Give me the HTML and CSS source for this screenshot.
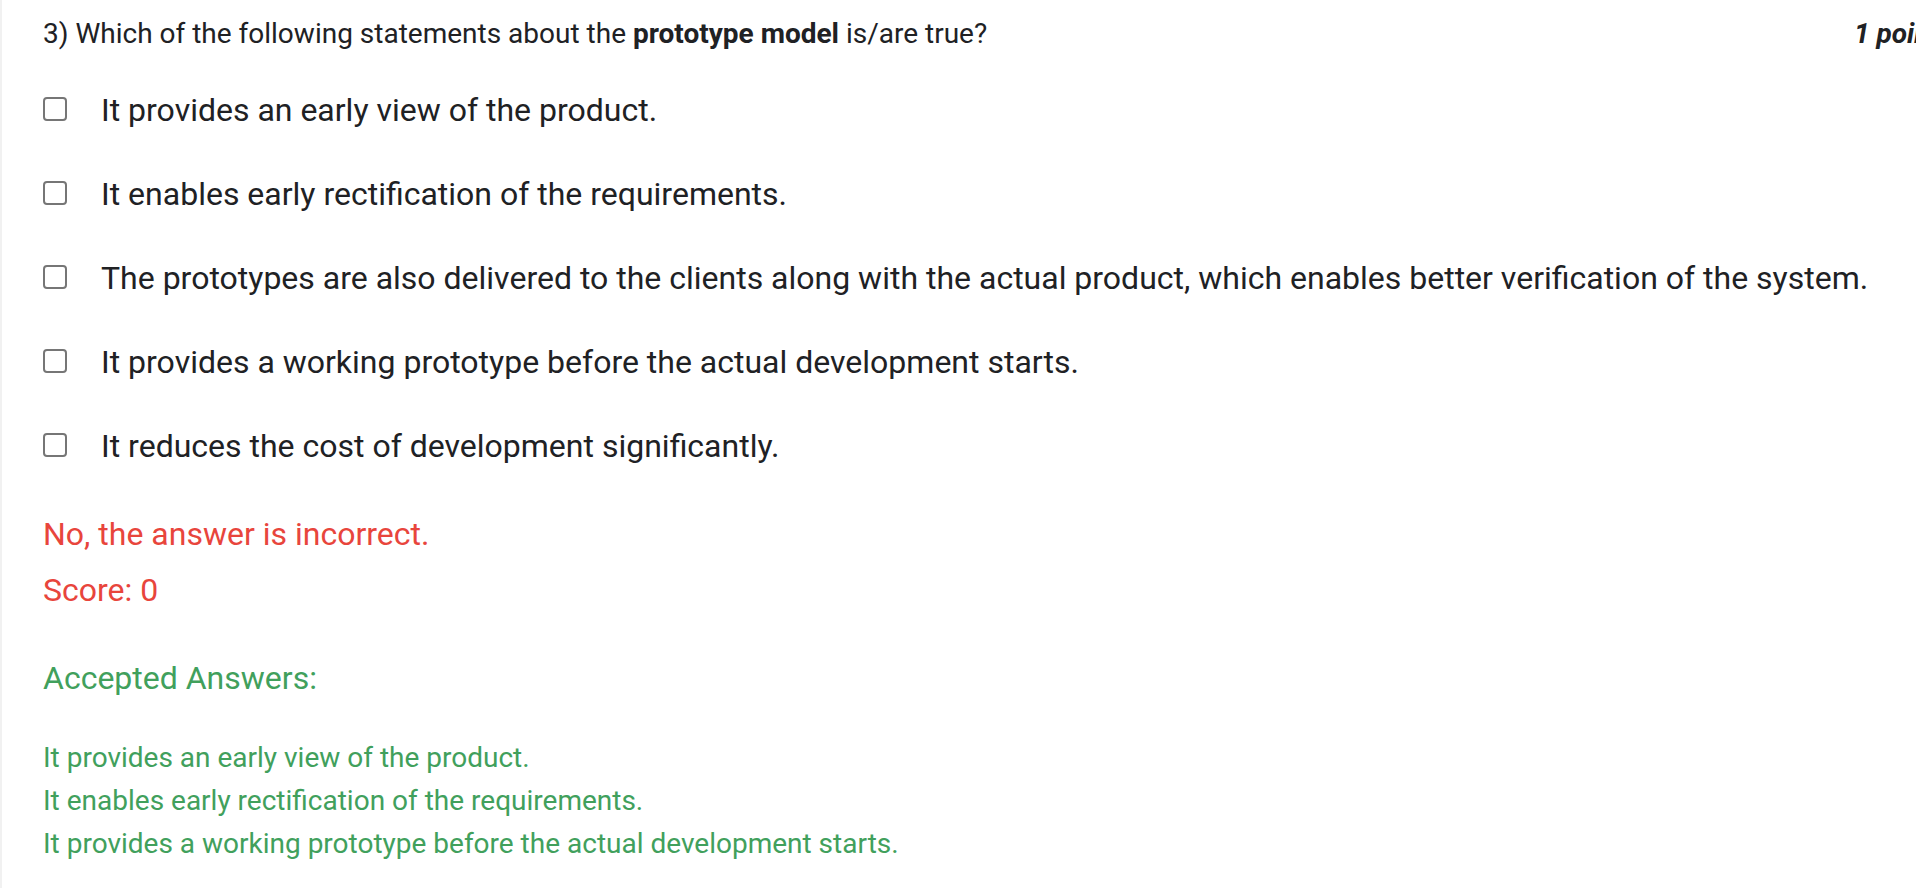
FILE: index.html
```html
<!DOCTYPE html>
<html lang="en">
<head>
<meta charset="utf-8">
<title>Assessment</title>
<link rel="stylesheet" href="styles.css">
</head>
<body>
<div class="quiz">
  <div class="qrow">
    <div class="question">3) Which of the following statements about the <b>prototype model</b> is/are true?</div>
    <div class="points">1 point</div>
  </div>
  <div class="options">
    <label class="option"><span class="box"></span><span class="otext">It provides an early view of the product.</span></label>
    <label class="option"><span class="box"></span><span class="otext">It enables early rectification of the requirements.</span></label>
    <label class="option"><span class="box"></span><span class="otext">The prototypes are also delivered to the clients along with the actual product, which enables better verification of the system.</span></label>
    <label class="option"><span class="box"></span><span class="otext">It provides a working prototype before the actual development starts.</span></label>
    <label class="option"><span class="box"></span><span class="otext">It reduces the cost of development significantly.</span></label>
  </div>
  <div class="feedback">
    <div class="wrong">No, the answer is incorrect.</div>
    <div class="score">Score: 0</div>
  </div>
  <div class="accepted">
    <div class="acc-title">Accepted Answers:</div>
    <div class="acc-list">
      <div class="acc-item">It provides an early view of the product.</div>
      <div class="acc-item">It enables early rectification of the requirements.</div>
      <div class="acc-item">It provides a working prototype before the actual development starts.</div>
    </div>
  </div>
</div>
</body>
</html>
```
FILE: styles.css
```css
html, body {
  margin: 0;
  padding: 0;
  background: #ffffff;
}
body {
  font-family: Roboto, "Noto Sans", sans-serif;
  color: #202124;
  overflow: hidden;
}
.quiz {
  min-height: 888px;
  box-sizing: border-box;
  border-left: 2px solid #f1f1f1;
  padding: 14px 0 0 41px;
}
.qrow {
  display: flex;
  justify-content: space-between;
  align-items: center;
}
.question {
  font-size: 28px;
  line-height: 40px;
  white-space: nowrap;
}
.question b {
  font-weight: 700;
}
.points {
  flex: none;
  width: 62px;
  overflow: hidden;
  white-space: nowrap;
  font-size: 28px;
  line-height: 40px;
  font-weight: 700;
  font-style: italic;
}
.options {
  display: flex;
  flex-direction: column;
  margin-top: 14px;
}
.option {
  display: flex;
  align-items: center;
  height: 84px;
  font-size: 32px;
}
.box {
  flex: none;
  width: 20px;
  height: 20px;
  border: 2px solid #767676;
  border-radius: 4px;
  margin-top: -2px;
  margin-right: 34px;
}
.otext {
  white-space: nowrap;
}
.feedback {
  margin-top: 26px;
  color: #e8453c;
  font-size: 32px;
  display: flex;
  flex-direction: column;
  gap: 16px;
}
.feedback div {
  line-height: 40px;
}
.accepted {
  margin-top: 48px;
  color: #41a05c;
}
.acc-title {
  font-size: 32px;
  line-height: 40px;
}
.acc-list {
  margin-top: 38px;
  font-size: 28px;
}
.acc-item {
  line-height: 43px;
}
```
